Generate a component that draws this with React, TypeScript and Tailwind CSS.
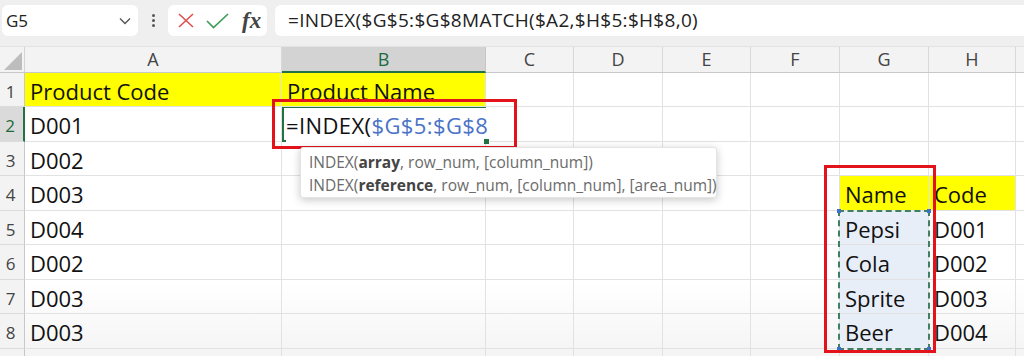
import React from 'react';

const cols = [
  { key: 'A', w: 'w-[257px]' },
  { key: 'B', w: 'w-[204px]' },
  { key: 'C', w: 'w-[88px]' },
  { key: 'D', w: 'w-[89px]' },
  { key: 'E', w: 'w-[88px]' },
  { key: 'F', w: 'w-[89px]' },
  { key: 'G', w: 'w-[89px]' },
  { key: 'H', w: 'w-[87px]' },
];

type Cell = { text?: string; yellow?: boolean; picked?: boolean };

const rows: { n: number; h: string; cells: Record<string, Cell> }[] = [
  { n: 1, h: 'h-[34px]', cells: { A: { text: 'Product Code', yellow: true }, B: { text: 'Product Name', yellow: true } } },
  { n: 2, h: 'h-[35px]', cells: { A: { text: 'D001' } } },
  { n: 3, h: 'h-[34px]', cells: { A: { text: 'D002' } } },
  { n: 4, h: 'h-[35px]', cells: { A: { text: 'D003' }, G: { text: 'Name', yellow: true }, H: { text: 'Code', yellow: true } } },
  { n: 5, h: 'h-[34px]', cells: { A: { text: 'D004' }, G: { text: 'Pepsi', picked: true }, H: { text: 'D001' } } },
  { n: 6, h: 'h-[35px]', cells: { A: { text: 'D002' }, G: { text: 'Cola', picked: true }, H: { text: 'D002' } } },
  { n: 7, h: 'h-[34px]', cells: { A: { text: 'D003' }, G: { text: 'Sprite', picked: true }, H: { text: 'D003' } } },
  { n: 8, h: 'h-[35px]', cells: { A: { text: 'D003' }, G: { text: 'Beer', picked: true }, H: { text: 'D004' } } },
  { n: 9, h: 'h-[35px]', cells: {} },
];

function Toolbar() {
  return (
    <div className="h-[46px] bg-[#efefef] flex items-start pt-[5px]">
      <div className="ml-[2px] w-[136px] h-[31px] rounded-md bg-white flex items-center justify-between pl-[4px] pr-[7px]">
        <span className="text-[17px] text-[#222]">G5</span>
        <svg width="12" height="8" viewBox="0 0 12 8" fill="none" stroke="#555" strokeWidth="1.4">
          <path d="M1 1.5l5 5 5-5" />
        </svg>
      </div>
      <div className="w-[30px] h-[31px] flex flex-col items-center justify-center gap-[2px]">
        <span className="w-[3px] h-[3px] rounded-full bg-[#555]" />
        <span className="w-[3px] h-[3px] rounded-full bg-[#555]" />
        <span className="w-[3px] h-[3px] rounded-full bg-[#555]" />
      </div>
      <div className="w-[99px] h-[31px] rounded-md bg-white flex items-center pl-[10px]">
        <svg width="16" height="15" viewBox="0 0 16 15" fill="none" stroke="#e05050" strokeWidth="1.6">
          <path d="M1 1l14 13M15 1L1 14" />
        </svg>
        <svg className="ml-[12px]" width="23" height="16" viewBox="0 0 23 16" fill="none" stroke="#3f9d5c" strokeWidth="1.7">
          <path d="M1 8l6.5 6.5L22 1" />
        </svg>
        <span className="ml-[13px] text-[23px] italic font-bold text-[#444] font-['Liberation_Serif',serif] leading-none">fx</span>
      </div>
      <div className="ml-[8px] flex-1 h-[31px] rounded-l-md bg-white flex items-center pl-[13px]">
        <span className="text-[19px] tracking-[0.3px] text-[#222] whitespace-nowrap">=INDEX($G$5:$G$8MATCH($A2,$H$5:$H$8,0)</span>
      </div>
    </div>
  );
}

function HeaderRow() {
  return (
    <div className="flex h-[27px] bg-[#f3f3f3] border-b border-[#c8c8c8] border-t border-t-[#e2e2e2]">
      <div className="w-[25px] border-r border-[#d4d4d4] flex items-end justify-end pr-[2px] pb-[2px]">
        <svg width="18" height="18" viewBox="0 0 18 18">
          <path d="M18 0V18H0Z" fill="#bdbdbd" />
        </svg>
      </div>
      {cols.map((c) => (
        <div
          key={c.key}
          className={`${c.w} flex items-center justify-center text-[18px] border-r ${
            c.key === 'B'
              ? 'bg-[#d3d3d3] text-[#1d6b40] border-[#c4c4c4] border-b-2 border-b-[#217346] -mb-px'
              : 'text-[#444] border-[#d8d8d8]'
          }`}
        >
          {c.key}
        </div>
      ))}
      <div className="flex-1" />
    </div>
  );
}

function Sheet() {
  return (
    <div className="relative bg-gradient-to-b from-white from-70% to-[#f0f0f0]">
      <HeaderRow />
      {rows.map((r) => (
        <div key={r.n} className={`flex ${r.h}`}>
          <div
            className={`w-[25px] border-b border-[#dcdcdc] flex items-center justify-center text-[17px] pr-[3px] pt-[4px] ${
              r.n === 2
                ? 'bg-[#dadada] text-[#1d6b40] border-r-2 border-r-[#217346]'
                : 'bg-[#f3f3f3] text-[#444] border-r border-r-[#c8c8c8]'
            }`}
          >
            {r.n < 9 ? r.n : ''}
          </div>
          {cols.map((c) => {
            const cell = r.cells[c.key];
            if (r.n === 2 && c.key === 'B') {
              return (
                <div
                  key={c.key}
                  className={`${c.w} relative z-10 border-l-2 border-b-2 border-t border-[#217346] flex items-center pl-[2px] pt-[2px] bg-white`}
                >
                  <span className="text-[22px] tracking-[0.4px] whitespace-nowrap text-[#111] bg-white pr-[2px]">
                    =INDEX(<span className="text-[#4a73c7]">$G$5:$G$8</span>
                  </span>
                  <span className="absolute -right-[3px] -bottom-[4px] w-[5px] h-[5px] bg-[#217346]" />
                </div>
              );
            }
            return (
              <div
                key={c.key}
                className={`${c.w} border-r border-b border-[#e2e2e2] flex items-center pl-[5px] pt-[3px] whitespace-nowrap text-[22px] text-[#111] ${
                  cell?.yellow ? 'bg-[#ffff00]' : cell?.picked ? 'bg-[#e8eef8]' : ''
                }`}
              >
                {cell?.text}
              </div>
            );
          })}
          <div className="flex-1 border-b border-[#e2e2e2]" />
        </div>
      ))}

      {/* red highlight around B2 */}
      <div className="absolute z-20 left-[272px] top-[53px] w-[245px] h-[50px] border-[3px] border-[#e3131b]" />

      {/* function tooltip */}
      <div className="absolute z-20 left-[300px] top-[101px] w-[417px] h-[51px] bg-white rounded-[3px] shadow-[0_2px_8px_rgba(0,0,0,0.22)] border border-[#e4e4e4] pl-[8px] pt-[3px] text-[15.5px] leading-[23px] text-[#6b6b6b] whitespace-nowrap">
        <div>
          INDEX(<b className="text-[#444]">array</b>, row_num, [column_num])
        </div>
        <div>
          INDEX(<b className="text-[#444]">reference</b>, row_num, [column_num], [area_num])
        </div>
      </div>

      {/* copy marquee on G5:G8 */}
      <div className="absolute z-10 left-[838px] top-[164px] w-[92px] h-[140px] border-2 border-dashed border-[#3f7f62]">
        <span className="absolute -left-[3px] -top-[3px] w-[4px] h-[4px] bg-[#3d6fd0]" />
        <span className="absolute -right-[3px] -top-[3px] w-[4px] h-[4px] bg-[#3d6fd0]" />
        <span className="absolute -left-[3px] -bottom-[3px] w-[4px] h-[4px] bg-[#3d6fd0]" />
        <span className="absolute -right-[3px] -bottom-[3px] w-[4px] h-[4px] bg-[#3d6fd0]" />
      </div>

      {/* red highlight around lookup column */}
      <div className="absolute z-20 left-[824px] top-[119px] w-[112px] h-[188px] border-[3px] border-[#e3131b]" />
    </div>
  );
}

export default function App() {
  return (
    <div className="w-[1024px] h-[356px] overflow-hidden bg-white font-['Open_Sans',sans-serif]">
      <Toolbar />
      <Sheet />
    </div>
  );
}
